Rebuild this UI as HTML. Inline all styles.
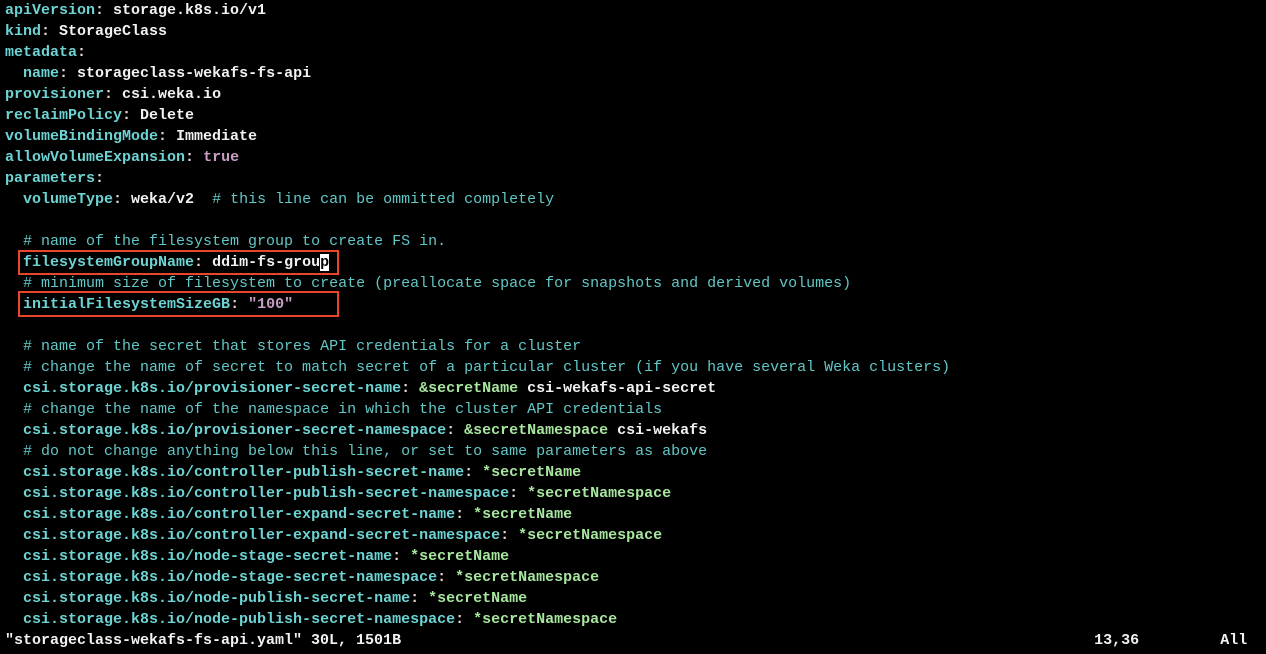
<!DOCTYPE html>
<html><head><meta charset="utf-8"><style>
body{margin:0;background:#000;width:1266px;height:654px;overflow:hidden;position:relative}
pre{margin:0;position:absolute;left:5px;top:0;font:bold 15px/21px "Liberation Mono",monospace;color:#f2f2f2;letter-spacing:0}
.k{color:#6dd3d3}.c{color:#e8d8d8}.p{color:#c79ec4}.a{color:#a8e6a0}.m{color:#62c7c7;font-weight:normal}
.cur{background:#fff;color:#000}
.box{position:absolute;border:2px solid #e8452a;box-sizing:border-box}
</style></head><body>
<pre><span class="k">apiVersion</span><span class="c">:</span> storage.k8s.io/v1
<span class="k">kind</span><span class="c">:</span> StorageClass
<span class="k">metadata</span><span class="c">:</span>
  <span class="k">name</span><span class="c">:</span> storageclass-wekafs-fs-api
<span class="k">provisioner</span><span class="c">:</span> csi.weka.io
<span class="k">reclaimPolicy</span><span class="c">:</span> Delete
<span class="k">volumeBindingMode</span><span class="c">:</span> Immediate
<span class="k">allowVolumeExpansion</span><span class="c">:</span> <span class="p">true</span>
<span class="k">parameters</span><span class="c">:</span>
  <span class="k">volumeType</span><span class="c">:</span> weka/v2  <span class="m"># this line can be ommitted completely</span>

  <span class="m"># name of the filesystem group to create FS in.</span>
  <span class="k">filesystemGroupName</span><span class="c">:</span> ddim-fs-grou<span class="cur">p</span>
  <span class="m"># minimum size of filesystem to create (preallocate space for snapshots and derived volumes)</span>
  <span class="k">initialFilesystemSizeGB</span><span class="c">:</span> <span class="p">"100"</span>

  <span class="m"># name of the secret that stores API credentials for a cluster</span>
  <span class="m"># change the name of secret to match secret of a particular cluster (if you have several Weka clusters)</span>
  <span class="k">csi.storage.k8s.io/provisioner-secret-name</span><span class="c">:</span> <span class="a">&amp;secretName</span> csi-wekafs-api-secret
  <span class="m"># change the name of the namespace in which the cluster API credentials</span>
  <span class="k">csi.storage.k8s.io/provisioner-secret-namespace</span><span class="c">:</span> <span class="a">&amp;secretNamespace</span> csi-wekafs
  <span class="m"># do not change anything below this line, or set to same parameters as above</span>
  <span class="k">csi.storage.k8s.io/controller-publish-secret-name</span><span class="c">:</span> <span class="a">*secretName</span>
  <span class="k">csi.storage.k8s.io/controller-publish-secret-namespace</span><span class="c">:</span> <span class="a">*secretNamespace</span>
  <span class="k">csi.storage.k8s.io/controller-expand-secret-name</span><span class="c">:</span> <span class="a">*secretName</span>
  <span class="k">csi.storage.k8s.io/controller-expand-secret-namespace</span><span class="c">:</span> <span class="a">*secretNamespace</span>
  <span class="k">csi.storage.k8s.io/node-stage-secret-name</span><span class="c">:</span> <span class="a">*secretName</span>
  <span class="k">csi.storage.k8s.io/node-stage-secret-namespace</span><span class="c">:</span> <span class="a">*secretNamespace</span>
  <span class="k">csi.storage.k8s.io/node-publish-secret-name</span><span class="c">:</span> <span class="a">*secretName</span>
  <span class="k">csi.storage.k8s.io/node-publish-secret-namespace</span><span class="c">:</span> <span class="a">*secretNamespace</span>
"storageclass-wekafs-fs-api.yaml" 30L, 1501B                                                                             13,36         All</pre>
<div class="box" style="left:18px;top:250px;width:321px;height:25px"></div>
<div class="box" style="left:18px;top:291px;width:321px;height:26px"></div>
</body></html>
